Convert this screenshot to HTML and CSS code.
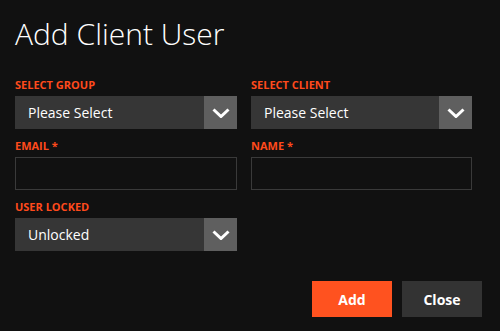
FILE: index.html
```html
<!DOCTYPE html>
<html lang="en">
<head>
  <meta charset="UTF-8">
  <meta name="viewport" content="width=device-width, initial-scale=1.0">
  <title>Add Client User</title>
  <link rel="stylesheet" href="styles.css">
</head>
<body>
  <div class="modal">
    <h1 class="title">Add Client User</h1>
    <form class="form">
      <div class="field">
        <label>SELECT GROUP</label>
        <div class="select">
          <span>Please Select</span>
          <span class="arrow"><svg width="18" height="10" viewBox="0 0 18 10"><path d="M1.5 1.5 L9 8.5 L16.5 1.5" fill="none" stroke="#fff" stroke-width="3"/></svg></span>
        </div>
      </div>
      <div class="field">
        <label>SELECT CLIENT</label>
        <div class="select">
          <span>Please Select</span>
          <span class="arrow"><svg width="18" height="10" viewBox="0 0 18 10"><path d="M1.5 1.5 L9 8.5 L16.5 1.5" fill="none" stroke="#fff" stroke-width="3"/></svg></span>
        </div>
      </div>
      <div class="field">
        <label>EMAIL *</label>
        <input type="text" class="input">
      </div>
      <div class="field">
        <label>NAME *</label>
        <input type="text" class="input">
      </div>
      <div class="field">
        <label>USER LOCKED</label>
        <div class="select">
          <span>Unlocked</span>
          <span class="arrow"><svg width="18" height="10" viewBox="0 0 18 10"><path d="M1.5 1.5 L9 8.5 L16.5 1.5" fill="none" stroke="#fff" stroke-width="3"/></svg></span>
        </div>
      </div>
    </form>
    <div class="actions">
      <button type="button" class="btn btn-add">Add</button>
      <button type="button" class="btn btn-close">Close</button>
    </div>
  </div>
</body>
</html>
```

FILE: styles.css
```css
html, body {
  margin: 0;
  padding: 0;
  background: #111111;
  font-family: "Open Sans", sans-serif;
  color: #fff;
}

.modal {
  width: 500px;
  height: 331px;
  box-sizing: border-box;
  padding: 13px 18px 0 15px;
}

.title {
  margin: 0;
  font-size: 30px;
  font-weight: 300;
  line-height: 42px;
}

.form {
  display: grid;
  grid-template-columns: 222px 221px;
  column-gap: 14px;
  row-gap: 10px;
  margin-top: 23px;
}

.field label {
  display: block;
  color: #ff4a1c;
  font-size: 11px;
  font-weight: 700;
  line-height: 14px;
  height: 14px;
  margin-bottom: 4px;
}

.select {
  display: flex;
  align-items: center;
  height: 33px;
  background: #363636;
  font-size: 14px;
  color: #fff;
}

.select span:first-child {
  flex: 1;
  padding-left: 13px;
}

.arrow {
  width: 33px;
  height: 33px;
  background: #5f5f5f;
  display: flex;
  align-items: center;
  justify-content: center;
}

.input {
  display: block;
  width: 100%;
  height: 33px;
  box-sizing: border-box;
  background: #111111;
  border: 1px solid #3a3a3a;
  margin: 0;
  outline: none;
}

.actions {
  display: flex;
  justify-content: flex-end;
  gap: 10px;
  margin-top: 30px;
}

.btn {
  width: 80px;
  height: 36px;
  border: none;
  font-family: "Open Sans", sans-serif;
  font-size: 14px;
  font-weight: 700;
  color: #fff;
  cursor: pointer;
}

.btn-add {
  background: #ff521f;
}

.btn-close {
  background: #333333;
}
```
